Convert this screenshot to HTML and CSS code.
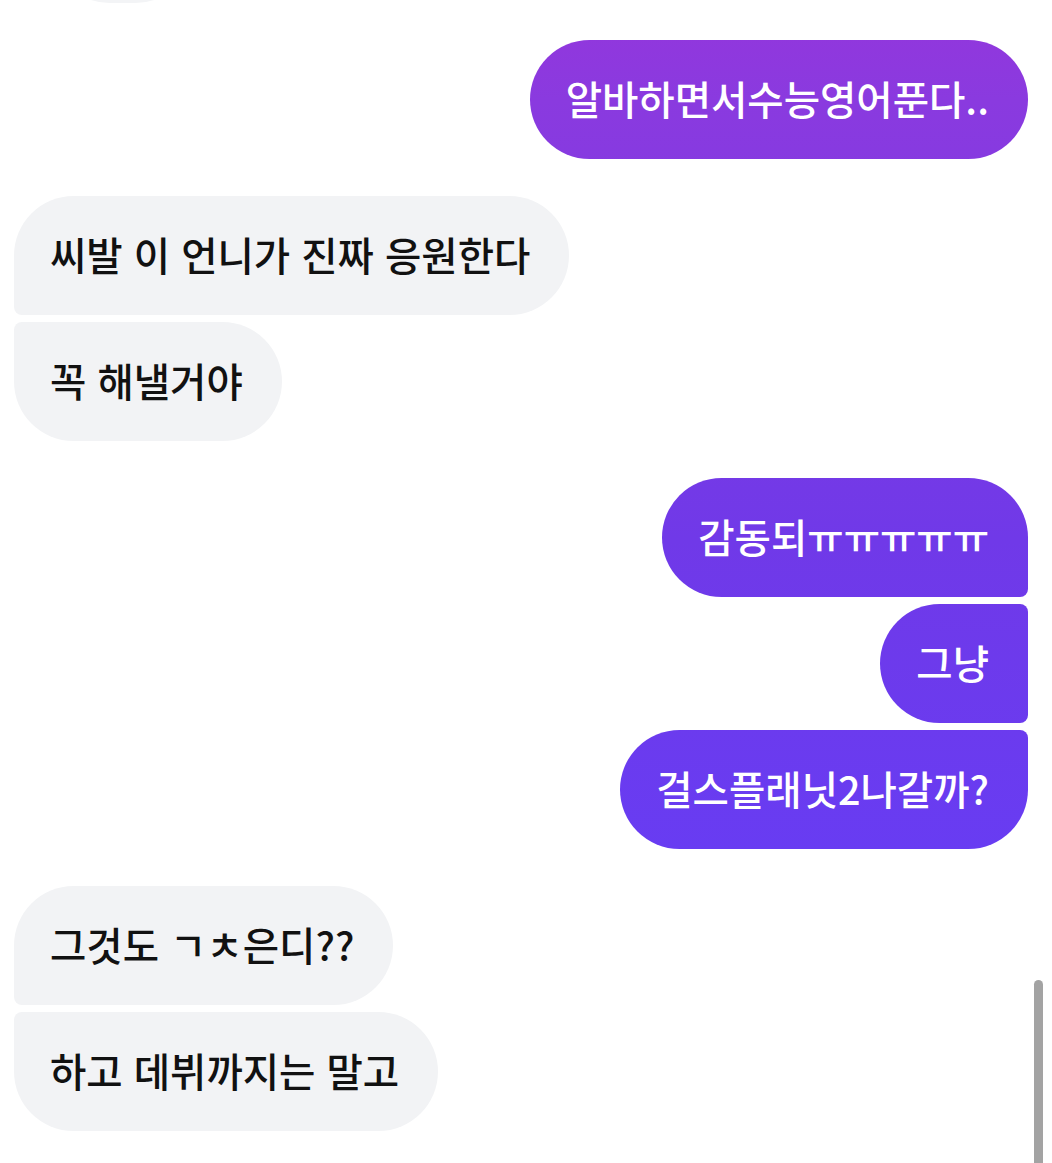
FILE: index.html
```html
<!DOCTYPE html>
<html lang="ko">
  <head>
    <meta charset="UTF-8" />
    <meta name="viewport" content="width=device-width, initial-scale=1.0" />
    <title>DM</title>
    <link rel="stylesheet" href="styles.css">
  </head>
  <body>
    <div class="thread">
      <div class="messages">
        <!-- previous message, scrolled out -->
        <div class="group them">
          <div class="bubble peek">&nbsp;</div>
        </div>

        <div class="group me">
          <div class="bubble">알바하면서수능영어푼다..</div>
        </div>

        <div class="group them">
          <div class="bubble">씨발 이 언니가 진짜 응원한다</div>
          <div class="bubble">꼭 해낼거야</div>
        </div>

        <div class="group me">
          <div class="bubble">감동되ㅠㅠㅠㅠㅠ</div>
          <div class="bubble">그냥</div>
          <div class="bubble">걸스플래닛2나갈까?</div>
        </div>

        <div class="group them">
          <div class="bubble">그것도 ㄱㅊ은디??</div>
          <div class="bubble">하고 데뷔까지는 말고</div>
        </div>
      </div>
      <div class="scrollbar"></div>
    </div>
  </body>
</html>
```

FILE: styles.css
```css
body {
  margin: 0;
  background: #fff;
  font-family: "Noto Sans CJK KR", "Noto Sans", sans-serif;
}

.thread {
  position: relative;
  height: 1163px;
  overflow: hidden;
}

.messages {
  display: flex;
  flex-direction: column;
  gap: 37px;
  margin-top: -116px;
  padding: 0 24px 0 14px;
}

.group {
  display: flex;
  flex-direction: column;
  gap: 7px;
}

.group.me {
  align-items: flex-end;
}

.group.them {
  align-items: flex-start;
}

.bubble {
  box-sizing: border-box;
  height: 119px;
  padding: 0 39px 5px 36px;
  display: flex;
  align-items: center;
  font-size: 39.5px;
  font-weight: 500;
  border-radius: 60px;
  white-space: nowrap;
}

.them .bubble {
  background: #f2f3f5;
  color: #111;
}

.me .bubble {
  color: #fff;
  background: linear-gradient(180deg, #9436dc 0px, #8a3adf 100px, #7039e8 540px, #683cf2 850px, #6540f4 1163px);
  background-attachment: fixed;
}

/* grouped corners */
.them .bubble:not(:last-child) {
  border-bottom-left-radius: 8px;
}

.them .bubble:not(:first-child) {
  border-top-left-radius: 8px;
}

.me .bubble:not(:last-child) {
  border-bottom-right-radius: 8px;
}

.me .bubble:not(:first-child) {
  border-top-right-radius: 8px;
}

.bubble.peek {
  width: 145px;
  margin-left: 36px;
  background: #f3f4f6;
}

.scrollbar {
  position: absolute;
  right: 9px;
  top: 980px;
  width: 9px;
  height: 200px;
  border-radius: 5px 5px 0 0;
  background: #a3a3a3;
}
```
